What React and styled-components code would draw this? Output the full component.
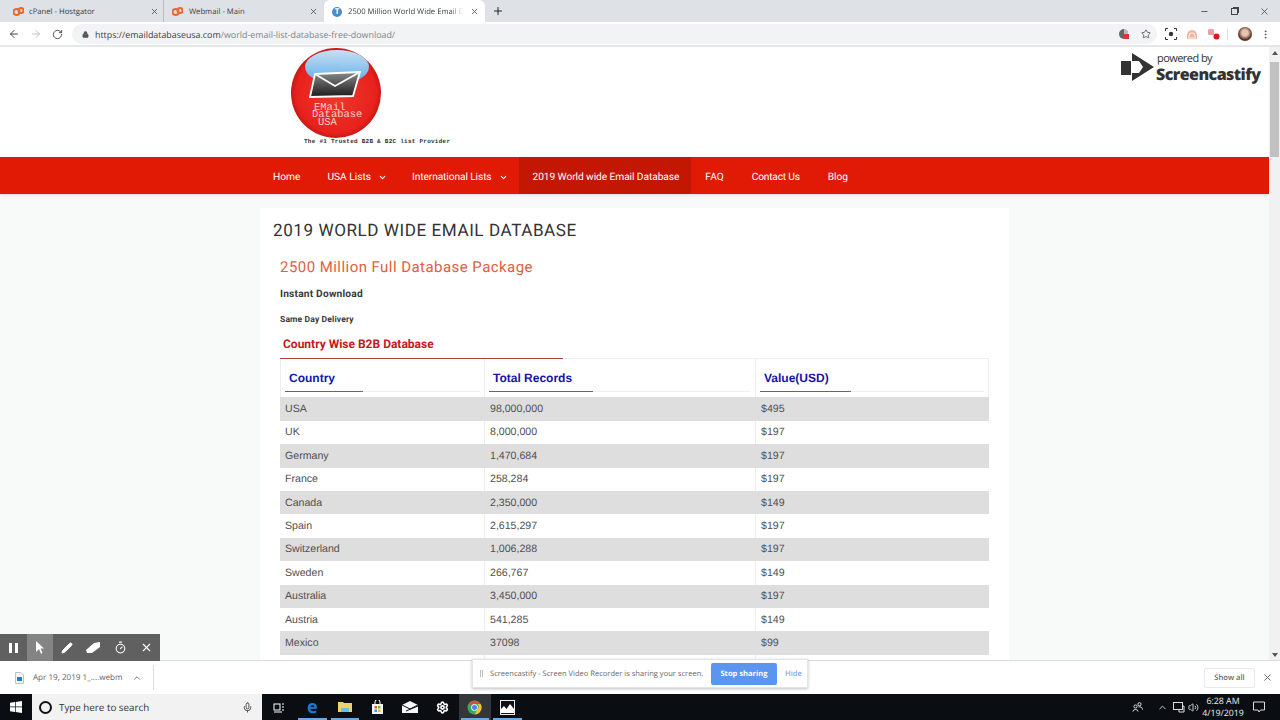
import React from "react";
import styled, { createGlobalStyle } from "styled-components";
import { ArrowLeft, ArrowRight, RotateCw, Lock, Star, X, Plus, Minus, ChevronDown, ChevronUp, Pencil, Timer, Mic, MoreVertical, Volume2, Settings } from "lucide-react";

const Global = createGlobalStyle`
  html, body { margin: 0; padding: 0; height: 100%; overflow: hidden; background: #fff; }
  * { box-sizing: border-box; }
  body { font-family: "Roboto", "Liberation Sans", sans-serif; text-rendering: geometricPrecision; }
`;

const Shell = styled.div`
  position: relative; width: 1280px; height: 720px; display: flex; flex-direction: column; overflow: hidden;
`;
const TabBar = styled.div`
  height: 22px; background: #dee1e6; display: flex; align-items: flex-end; flex: none; color: #3c4043;
`;
const Tab = styled.div`
  width: ${p => p.$w}px; height: 22px; display: flex; align-items: center; padding: 1px ${p => p.$pr ?? 6}px 0 ${p => p.$pl}px; gap: ${p => p.$gap ?? 5}px;
  font-family: "Open Sans", sans-serif; font-size: 7.7px; white-space: nowrap; overflow: hidden;
  background: ${p => (p.$active ? "#fff" : "transparent")};
  border-radius: ${p => (p.$active ? "6px 6px 0 0" : "0")};
  border-right: ${p => (p.$divide ? "1px solid #b9bcc1" : "0")};
`;
const TabTitle = styled.span`
  flex: 1; overflow: hidden;
  ${p => p.$fade && "mask-image: linear-gradient(to right, #000 88%, transparent 100%);"}
`;
const TFav = styled.span`
  width: 10px; height: 10px; border-radius: 50%; background: #4a8cc9; color: #fff; font-size: 8px; font-weight: 700;
  display: flex; align-items: center; justify-content: center; flex: none;
`;
const NewTab = styled.div` width: 26px; height: 22px; display: flex; align-items: center; justify-content: center; color: #222; `;
const WinBtns = styled.div`
  margin-left: auto; display: flex; height: 22px; align-items: center; gap: 0; color: #333;
`;
const WinBtn = styled.div` width: 30px; display: flex; justify-content: center; margin-right: ${p => p.$mr || 0}px; `;
const Restore = styled.span`
  width: 7px; height: 7px; border: 1px solid #444; box-shadow: 1.5px -1.5px 0 -0.5px #444; display: block;
`;
const AddressRow = styled.div`
  height: 25px; flex: none; background: #fff; display: flex; align-items: center; padding: 1px 0 0 8px; border-bottom: 2px solid #e6e7e9; color: #5f6368;
`;
const NavIcons = styled.div` display: flex; gap: 10px; align-items: center; width: 64px; `;
const Omni = styled.div`
  width: 1085px; height: 20px; border-radius: 10px; background: #f1f3f4; display: flex; align-items: center; padding: 0 1px 0 10px; gap: 6px;
`;
const UrlText = styled.div`
  font-family: "Open Sans", sans-serif; font-size: 8.9px; color: #80868b; flex: 1; white-space: nowrap;
  b { font-weight: 400; color: #3c4043; }
`;
const ExtIcons = styled.div` display: flex; align-items: center; margin-left: 4px; `;
const ExtSlot = styled.span` width: ${p => p.$w}px; display: flex; justify-content: center; align-items: center; `;
const ExtSep = styled.span` width: 1px; height: 11px; background: #dde; margin: 0 6px 0 3px; `;
const Avatar = styled.span` width: 14px; height: 14px; border-radius: 50%; background: radial-gradient(circle at 50% 42%, #e8c4b0 28%, #5e3428 62%); display:block; `;

const Viewport = styled.div` flex: none; height: 613px; display: flex; overflow: hidden; `;
const Page = styled.div` width: 1269px; background: #f8f9f9; overflow: hidden; `;
const Header = styled.div` height: 110px; background: #fff; padding-left: 290px; `;
const LogoBox = styled.div` width: 165px; height: 110px; `;
const Nav = styled.nav`
  height: 37px; background: #e01a04; display: flex; padding-left: 260px; box-shadow: 0 1px 3px rgba(0,0,0,.12);
`;
const NavItem = styled.div`
  height: 37px; display: flex; align-items: center; gap: 7px; padding: 3px ${p => p.$pr ?? 13}px 0 ${p => p.$pl ?? 13}px; color: #fff; font-size: 10.2px; white-space: nowrap;
  letter-spacing: ${p => p.$ls ?? 0}px;
  background: ${p => (p.$active ? "#c41703" : "transparent")};
`;
const Card = styled.main`
  margin: 14px 0 0 260px; width: 749px; background: #fff; padding: 13px 20px 0 13px;
`;
const Title = styled.h1`
  margin: 0; font-weight: 400; font-size: 17.1px; line-height: 20px; color: #333; letter-spacing: .55px;
`;
const Inner = styled.div` padding-left: 7px; `;
const Sub = styled.h2`
  margin: 16px 0 0; font-weight: 400; font-size: 15px; line-height: 20px; color: #e1603d; letter-spacing: .45px;
`;
const Instant = styled.div` margin-top: 11px; font-size: 10.2px; font-weight: 700; line-height: 14px; color: #3a3a3a; letter-spacing: .2px; `;
const Same = styled.div` margin-top: 12px; font-size: 8.5px; font-weight: 700; line-height: 12px; color: #3a3a3a; letter-spacing: .15px; `;
const Wise = styled.h3`
  margin: 11px 0 0; padding: 0 0 7px 3px; font-size: 12px; line-height: 14px; font-weight: 700; color: #c8171c; position: relative; border-bottom: 1px solid #eee;
  &::after { content: ""; position: absolute; left: 0; bottom: -1px; width: 283px; height: 1px; background: #a8423c; }
`;
const Table = styled.table`
  width: 709px; border-collapse: separate; border-spacing: 0; table-layout: fixed; font-family: "Liberation Sans", sans-serif; font-size: 10.6px; color: #505050;
`;
const Th = styled.th`
  width: ${p => p.$w}px; height: 38.4px; padding: 0 4px 5px; text-align: left; font-weight: 700; font-size: 12px; color: #1414ab;
  border-left: ${p => (p.$edge ? "1px solid #eee" : "0")}; border-right: 1px solid #eee; vertical-align: bottom;
`;
const HeadLabel = styled.div`
  position: relative; padding: 0 0 6px 4px; border-bottom: 1px solid #f0f0f0; line-height: 14px;
  &::after { content: ""; position: absolute; left: 0; bottom: -1px; width: ${p => p.$line}px; height: 1px; background: #b0483e; }
`;
const Tr = styled.tr` height: 23.4px; background: ${p => (p.$odd ? "#dedede" : "#fff")}; `;
const Td = styled.td` padding: 0 0 0 5px; border-right: ${p => (p.$line ? "1px solid #eee" : "0")}; `;

const Scrollbar = styled.div` width: 11px; background: #f1f1f1; display: flex; flex-direction: column; align-items: center; position: relative; `;
const ScrollArrow = styled.div`
  width: 0; height: 0; border-left: 3px solid transparent; border-right: 3px solid transparent;
  ${p => (p.$down ? "border-top: 4px solid #555; margin-top: auto; margin-bottom: 3px;" : "border-bottom: 4px solid #555; margin-top: 4px;")}
`;
const Thumb = styled.div` width: 9px; height: 95px; background: #c0c0c0; margin-top: 7px; `;

const Shelf = styled.div`
  height: 34px; flex: none; background: #fff; border-top: 1px solid #dcdcdc; display: flex; align-items: center; color: #5f6368;
`;
const DownloadItem = styled.div`
  width: 154px; height: 25px; border-right: 1px solid #ddd; display: flex; align-items: center; padding-left: 15px; gap: 9px; font-family: "Open Sans", sans-serif; font-size: 8.1px;
`;
const ShowAll = styled.div`
  margin-left: auto; margin-right: 7px; width: 51px; height: 20px; border: 1px solid #e8e8e8; border-radius: 2px; display: flex; align-items: center; justify-content: center;
  font-family: "Open Sans", sans-serif; font-size: 7.6px; font-weight: 600; color: #666;
`;
const ShelfClose = styled.div` margin-right: 7px; display: flex; `;

const Taskbar = styled.div`
  height: 26px; flex: none; background: #0a0d12; display: flex; align-items: stretch; color: #fff;
`;
const StartBtn = styled.div` width: 32px; display: flex; align-items: center; justify-content: center; `;
const SearchBox = styled.div`
  width: 230px; background: #f2f2f2; display: flex; align-items: center; padding: 0 9px 0 7px; color: #333;
  font-family: "Open Sans", sans-serif; font-size: 9.8px;
`;
const Cortana = styled.span` width: 13px; height: 13px; border-radius: 50%; border: 2px solid #111; margin-right: 7px; flex: none; `;
const SearchText = styled.span` flex: 1; `;
const TaskIcon = styled.div`
  width: ${p => p.$w || 32.5}px; display: flex; align-items: center; justify-content: center; position: relative;
  background: ${p => (p.$active ? "#33363b" : "transparent")};
  &::after { content: ""; position: absolute; left: 2px; right: 2px; bottom: 0; height: 2px; background: ${p => (p.$open ? "#6fa8dc" : "transparent")}; }
`;
const EdgeGlyph = styled.span` color: #1a78d6; font-weight: 700; font-size: 18px; font-family: "Open Sans", sans-serif; line-height: 1; `;
const Tray = styled.div` margin-left: auto; display: flex; align-items: center; padding-right: 8px; `;
const TraySlot = styled.span` width: ${p => p.$w}px; margin-left: ${p => p.$ml || 0}px; display: flex; justify-content: center; color: #ddd; `;
const Clock = styled.div`
  width: 46px; text-align: center; font-family: "Open Sans", sans-serif; font-size: 8.8px; line-height: 12px; color: #eee;
`;

const RecBar = styled.div`
  position: absolute; left: 0; top: 634px; width: 160px; height: 27px; background: #606060; display: flex; color: #fff;
`;
const RecBtn = styled.div`
  flex: 1; display: flex; align-items: center; justify-content: center; background: ${p => (p.$on ? "#848484" : "transparent")};
`;
const Share = styled.div`
  position: absolute; left: 472px; top: 659px; width: 336px; height: 29px; background: #fff; border: 1px solid #e4e4e4; box-shadow: 0 1px 3px rgba(0,0,0,.25);
  display: flex; align-items: center; padding-left: 7px; font-family: "Open Sans", sans-serif; font-size: 7.55px; color: #666; white-space: nowrap;
`;
const Grip = styled.span` width: 3px; height: 7px; border-left: 1px solid #bbb; border-right: 1px solid #bbb; margin-right: 7px; `;
const ShareText = styled.span` width: 221px; flex: none; `;
const StopBtn = styled.div`
  width: 66px; height: 22px; background: #5a95f0; color: #fff; font-weight: 700; border-radius: 2px; display: flex; align-items: center; justify-content: center; flex: none;
`;
const HideBtn = styled.span` margin-left: 8px; color: #8ea8d8; font-weight: 600; `;
const Branding = styled.div`
  position: absolute; left: 1121px; top: 51px; width: 145px; height: 34px; display: flex; gap: 2px; color: #333;
`;
const BrandMark = styled.svg` margin-top: 2px; flex: none; `;
const BrandText = styled.div` display: flex; flex-direction: column; padding-top: 1px; `;
const Powered = styled.span` font-family: "Open Sans", sans-serif; font-size: 11px; line-height: 13px; letter-spacing: -.55px; margin-left: 1px; `;
const BrandName = styled.span` font-family: "Open Sans", sans-serif; font-weight: 800; font-size: 16px; line-height: 19px; letter-spacing: -.55px; `;

const CpLogo = () => (
  <svg width="11" height="9" viewBox="0 0 22 18"><circle cx="7" cy="10" r="6" fill="none" stroke="#e8692c" strokeWidth="4" /><circle cx="16" cy="7" r="5" fill="none" stroke="#e8692c" strokeWidth="4" /></svg>
);

const Logo = () => (
  <svg width="165" height="110" viewBox="0 0 165 110">
    <defs>
      <radialGradient id="rb" cx="50%" cy="50%" r="52%"><stop offset="0" stopColor="#ee3a2e" /><stop offset=".85" stopColor="#e8211c" /><stop offset="1" stopColor="#c01612" /></radialGradient>
      <linearGradient id="sky" x1="0" y1="0" x2="0" y2="1"><stop offset="0" stopColor="#c8dff2" /><stop offset="1" stopColor="#5cacea" /></linearGradient>
      <linearGradient id="env" x1="0" y1="0" x2="0" y2="1"><stop offset="0" stopColor="#8a8a8a" /><stop offset="1" stopColor="#1c1c1c" /></linearGradient>
    </defs>
    <circle cx="46" cy="46" r="45" fill="url(#rb)" />
    <ellipse cx="47" cy="20" rx="32" ry="17" fill="url(#sky)" />
    <polygon points="25,27 70,25 63,49 20,50" fill="url(#env)" stroke="#fff" strokeWidth="1.800" />
    <polyline points="25,27 45,39 70,25" fill="none" stroke="#fff" strokeWidth="1.800" />
    <text x="24" y="63" fontFamily="Liberation Mono, monospace" fontSize="10.500" fill="#f6d0c8">EMail</text>
    <text x="22" y="70" fontFamily="Liberation Mono, monospace" fontSize="10.500" fill="#f6d0c8">Database</text>
    <text x="28" y="78" fontFamily="Liberation Mono, monospace" fontSize="10.500" fill="#f6d0c8">USA</text>
    <text x="14" y="96" fontFamily="Liberation Mono, monospace" fontSize="6" fontWeight="700" fill="#333" textLength="146">The #1 Trusted B2B &amp; B2C list Provider</text>
  </svg>
);

const rows = [
  ["USA", "98,000,000", "$495"], ["UK", "8,000,000", "$197"], ["Germany", "1,470,684", "$197"], ["France", "258,284", "$197"],
  ["Canada", "2,350,000", "$149"], ["Spain", "2,615,297", "$197"], ["Switzerland", "1,006,288", "$197"], ["Sweden", "266,767", "$149"],
  ["Australia", "3,450,000", "$197"], ["Austria", "541,285", "$149"], ["Mexico", "37098", "$99"], ["", "", ""],
];

export default function App() {
  return (
    <Shell>
      <Global />
      <TabBar>
        <Tab $w={164} $pl={13} $pr={4} $divide><CpLogo /><TabTitle>cPanel - Hostgator</TabTitle><X size={9} /></Tab>
        <Tab $w={160} $pl={8} $gap={6}><CpLogo /><TabTitle>Webmail - Main</TabTitle><X size={9} /></Tab>
        <Tab $w={161} $pl={8} $gap={6} $active><TFav>T</TFav><TabTitle $fade>2500 Million World Wide Email Data</TabTitle><X size={9} /></Tab>
        <NewTab><Plus size={12} /></NewTab>
        <WinBtns>
          <WinBtn><Minus size={9} /></WinBtn>
          <WinBtn><Restore /></WinBtn>
          <WinBtn $mr={1}><X size={11} strokeWidth={1.5} /></WinBtn>
        </WinBtns>
      </TabBar>
      <AddressRow>
        <NavIcons>
          <ArrowLeft size={12} color="#444" />
          <ArrowRight size={12} color="#c0c0c0" />
          <RotateCw size={11} color="#444" />
        </NavIcons>
        <Omni>
          <Lock size={7} fill="#555" color="#555" />
          <UrlText><b>https://emaildatabaseusa.com</b>/world-email-list-database-free-download/</UrlText>
          <svg width="10" height="10" viewBox="0 0 10 10"><path d="M5 0a5 5 0 1 0 0 10z" fill="#666" /><path d="M5 0a5 5 0 0 1 4 2v3H5z" fill="#bbb" /><rect x="5" y="5" width="5" height="5" fill="#d9363a" /></svg>
          <ExtSlot $w={21}><Star size={10} color="#555" /></ExtSlot>
        </Omni>
        <ExtIcons>
          <ExtSlot $w={20}>
            <svg width="12" height="12" viewBox="0 0 12 12" fill="none" stroke="#333"><path d="M.5 3V.5H3M9 .5h2.500V3M11.500 9v2.500H9M3 11.500H.5V9" /><circle cx="6" cy="6" r="2.200" fill="#333" stroke="none" /></svg>
          </ExtSlot>
          <ExtSlot $w={22}>
            <svg width="12" height="11" viewBox="0 0 12 11"><path d="M1 10V6a5 5 0 0 1 10 0v4z" fill="#f2b7a2" /><path d="M3 10V7a3 3 0 0 1 6 0v3M5 10V8M7 10V8" fill="none" stroke="#fff" strokeWidth=".8" /></svg>
          </ExtSlot>
          <ExtSlot $w={21}>
            <svg width="12" height="11" viewBox="0 0 12 11"><rect x="0" y="0" width="6" height="6" rx="1.500" fill="#eaa0a0" /><path d="M4 4l4 3" stroke="#e9a0a0" /><circle cx="8.500" cy="7.500" r="3" fill="#e5121f" /></svg>
          </ExtSlot>
          <ExtSep />
          <ExtSlot $w={21}><Avatar /></ExtSlot>
          <ExtSlot $w={21}><MoreVertical size={11} color="#555" /></ExtSlot>
        </ExtIcons>
      </AddressRow>

      <Viewport>
        <Page>
          <Header><LogoBox><Logo /></LogoBox></Header>
          <Nav>
            <NavItem $pr={14}>Home</NavItem>
            <NavItem $pr={12}>USA Lists <ChevronDown size={9} strokeWidth={3} /></NavItem>
            <NavItem $pr={11} $ls={-0.1}>International Lists <ChevronDown size={9} strokeWidth={3} /></NavItem>
            <NavItem $active $pl={14} $pr={12} $ls={-0.07}>2019 World wide Email Database</NavItem>
            <NavItem $pl={14} $pr={15}>FAQ</NavItem>
            <NavItem $ls={-0.2} $pr={15}>Contact Us</NavItem>
            <NavItem>Blog</NavItem>
          </Nav>
          <Card>
            <Title>2019 WORLD WIDE EMAIL DATABASE</Title>
            <Inner>
              <Sub>2500 Million Full Database Package</Sub>
              <Instant>Instant Download</Instant>
              <Same>Same Day Delivery</Same>
              <Wise>Country Wise B2B Database</Wise>
              <Table>
                <thead>
                  <tr>
                    <Th $w={205} $edge><HeadLabel $line={78}>Country</HeadLabel></Th>
                    <Th $w={271}><HeadLabel $line={104}>Total Records</HeadLabel></Th>
                    <Th $w={233}><HeadLabel $line={91}>Value(USD)</HeadLabel></Th>
                  </tr>
                </thead>
                <tbody>
                  {rows.map((r, i) => (
                    <Tr key={i} $odd={i % 2 === 0}>
                      <Td $line={i % 2 === 1}>{r[0]}</Td>
                      <Td $line={i % 2 === 1}>{r[1]}</Td>
                      <Td>{r[2]}</Td>
                    </Tr>
                  ))}
                </tbody>
              </Table>
            </Inner>
          </Card>
        </Page>
        <Scrollbar>
          <ScrollArrow />
          <Thumb />
          <ScrollArrow $down />
        </Scrollbar>
      </Viewport>

      <Shelf>
        <DownloadItem>
          <svg width="9" height="12" viewBox="0 0 9 12"><path d="M.5.5h5.500l2.500 2.500v8.500h-8z" fill="#f4f8fc" stroke="#b8c4d0" /><rect x="2" y="5" width="5" height="4" fill="#2a7ac8" /></svg>
          <span>Apr 19, 2019 1_....webm</span>
          <ChevronUp size={10} />
        </DownloadItem>
        <ShowAll>Show all</ShowAll>
        <ShelfClose><X size={11} /></ShelfClose>
      </Shelf>

      <Taskbar>
        <StartBtn>
          <svg width="12" height="12" viewBox="0 0 12 12" fill="#fff"><path d="M0 1.700 5 1v4.600H0zM5.700.9 12 0v5.600H5.700zM0 6.300h5v4.700l-5-.7zM5.700 6.300H12V12l-6.300-.9z" /></svg>
        </StartBtn>
        <SearchBox>
          <Cortana />
          <SearchText>Type here to search</SearchText>
          <Mic size={11} color="#444" />
        </SearchBox>
        <TaskIcon $w={34}>
          <svg width="12" height="11" viewBox="0 0 12 11" fill="none" stroke="#fff"><rect x="1" y="2" width="6" height="6" /><path d="M9 2h2M9 5h2M9 8h2M1 10h8" /></svg>
        </TaskIcon>
        <TaskIcon $open><EdgeGlyph>e</EdgeGlyph></TaskIcon>
        <TaskIcon $open>
          <svg width="14" height="12" viewBox="0 0 14 12"><path d="M0 1h5l1 1h8v9H0z" fill="#f1cf6a" /><rect x="3" y="7" width="8" height="4" fill="#6fc1d9" /></svg>
        </TaskIcon>
        <TaskIcon>
          <svg width="13" height="14" viewBox="0 0 13 14"><path d="M1 4h11v10H1z" fill="#f5f5f5" /><path d="M4 4V2a2.500 2.500 0 0 1 5 0v2" fill="none" stroke="#f5f5f5" /><rect x="3.500" y="6" width="2.500" height="2.500" fill="#e55b2d" /><rect x="7" y="6" width="2.500" height="2.500" fill="#7fb82d" /><rect x="3.500" y="9.500" width="2.500" height="2.500" fill="#2e9ae8" /><rect x="7" y="9.500" width="2.500" height="2.500" fill="#f4b62a" /></svg>
        </TaskIcon>
        <TaskIcon>
          <svg width="16" height="12" viewBox="0 0 16 12"><path d="M0 4 8 0l8 4v8H0z" fill="#f5f5f5" /><path d="M0 4l8 4 8-4M4 10l12-5" fill="none" stroke="#0a0d12" /></svg>
        </TaskIcon>
        <TaskIcon><Settings size={13} color="#fff" strokeWidth={3} /></TaskIcon>
        <TaskIcon $active $open>
          <svg width="15" height="15" viewBox="0 0 16 16"><circle cx="8" cy="8" r="7.500" fill="#3aa757" /><path d="M8 .5a7.500 7.500 0 0 1 6.500 3.750H8A3.750 3.750 0 0 0 4.500 6.500L2.300 3.200A7.500 7.500 0 0 1 8 .5z" fill="#e04a3c" /><path d="M14.500 4.250A7.500 7.500 0 0 1 8 15.500l3.200-5.500a3.750 3.750 0 0 0 0-5.750z" fill="#fbc02d" /><circle cx="8" cy="8" r="3.300" fill="#4a85e8" stroke="#fff" /></svg>
        </TaskIcon>
        <TaskIcon $open>
          <svg width="15" height="15" viewBox="0 0 15 15"><rect x=".5" y=".5" width="14" height="14" fill="#111" stroke="#eee" /><path d="M1 13V9l3-3 2.500 3L10 4l4 5v4z" fill="#fff" /></svg>
        </TaskIcon>
        <Tray>
          <TraySlot $w={22}>
            <svg width="11" height="10" viewBox="0 0 11 10" fill="none" stroke="#ddd"><circle cx="3.500" cy="4.500" r="1.600" /><circle cx="7.500" cy="2.200" r="1.600" /><path d="M.8 9.500a2.800 2.800 0 0 1 5.400 0M6.500 5a2.800 2.800 0 0 1 4 2.500" /></svg>
          </TraySlot>
          <TraySlot $w={20} $ml={4}><ChevronUp size={11} /></TraySlot>
          <TraySlot $w={14}>
            <svg width="12" height="11" viewBox="0 0 12 11" fill="none" stroke="#ddd"><rect x=".5" y=".5" width="9" height="7" /><path d="M6 8v2h5V4h-1" /></svg>
          </TraySlot>
          <TraySlot $w={14}><Volume2 size={11} color="#ddd" /></TraySlot>
          <Clock>6:28 AM<br />4/19/2019</Clock>
          <TraySlot $w={26}>
            <svg width="12" height="12" viewBox="0 0 12 12" fill="none" stroke="#ddd"><path d="M.5 1h11v8H7.500L6 11 5 9H.5z" /></svg>
          </TraySlot>
        </Tray>
      </Taskbar>

      <Branding>
        <BrandMark width="33" height="28" viewBox="0 0 33 28" fill="#333">
          <rect x="0" y="8" width="10" height="14" />
          <path d="M11 0 L33 14 L11 28 V20 H18 L22 14 L18 8 H11 Z" />
        </BrandMark>
        <BrandText>
          <Powered>powered by</Powered>
          <BrandName>Screencastify</BrandName>
        </BrandText>
      </Branding>

      <RecBar>
        <RecBtn>
          <svg width="9" height="10" viewBox="0 0 9 10" fill="#fff"><rect width="3" height="10" /><rect x="6" width="3" height="10" /></svg>
        </RecBtn>
        <RecBtn $on>
          <svg width="10" height="13" viewBox="0 0 10 13" fill="#fff"><path d="M1 0l8 7.500H5.500l2 4.500-1.500.700L4 8l-3 3z" /></svg>
        </RecBtn>
        <RecBtn><Pencil size={12} fill="#fff" /></RecBtn>
        <RecBtn>
          <svg width="14" height="12" viewBox="0 0 14 12" fill="#fff"><path d="M0 8 8 1l6-1v5l-8 6H1z" /></svg>
        </RecBtn>
        <RecBtn><Timer size={13} /></RecBtn>
        <RecBtn><X size={13} /></RecBtn>
      </RecBar>

      <Share>
        <Grip />
        <ShareText>Screencastify - Screen Video Recorder is sharing your screen.</ShareText>
        <StopBtn>Stop sharing</StopBtn>
        <HideBtn>Hide</HideBtn>
      </Share>
    </Shell>
  );
}
